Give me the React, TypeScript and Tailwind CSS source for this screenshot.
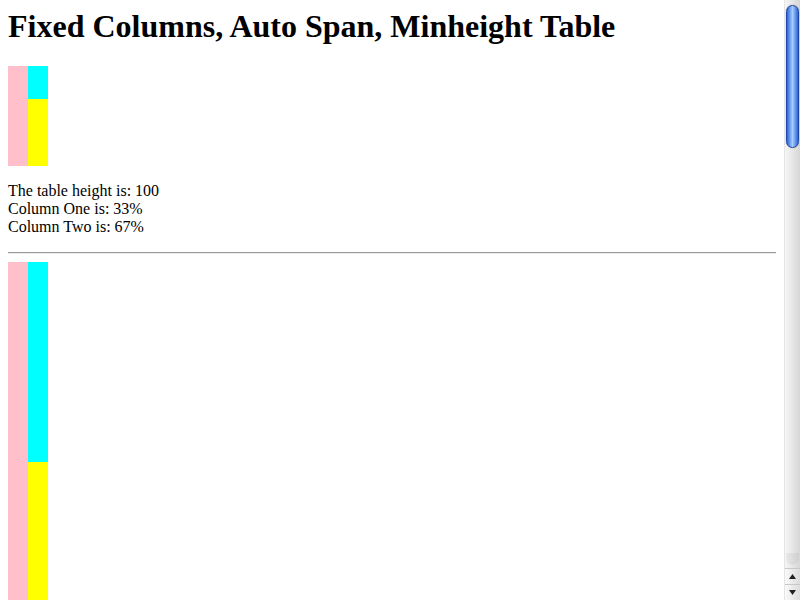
import React from "react";

function Bars({ h }: { h: number }) {
  const top = Math.round(h * 0.33);
  return (
    <div className="flex w-[40px] shrink-0" style={{ height: h }}>
      <div className="w-[20px] bg-[#ffc0cb]" />
      <div className="flex w-[20px] flex-col">
        <div className="bg-[#00ffff]" style={{ height: top }} />
        <div className="flex-1 bg-[#ffff00]" />
      </div>
    </div>
  );
}

function Scrollbar() {
  return (
    <div className="flex w-[16px] shrink-0 flex-col bg-linear-to-r from-[#f6f6f6] to-[#d6d6d6] border-l border-[#e4e4e4]">
      <div className="flex flex-1 flex-col">
        <div className="mx-[1px] mt-[5px] h-[143px] rounded-full border border-[#1c47a8] bg-linear-to-r from-[#2a63d8] via-[#a9ccff] to-[#2a63d8] shadow-[0_0_1px_#777]" />
        <div className="mx-[1px] mt-auto mb-[3px] h-[12px] rounded-b-full bg-linear-to-r from-[#e8e8e8] to-[#cfcfcf]" />
      </div>
      <div className="flex h-[16px] items-center justify-center border-t border-[#c8c8c8] bg-linear-to-r from-[#fafafa] to-[#dcdcdc]">
        <svg width="7" height="5" viewBox="0 0 7 5"><path d="M3.5 0L7 5H0z" fill="#222" /></svg>
      </div>
      <div className="flex h-[16px] items-center justify-center border-t border-[#c8c8c8] bg-linear-to-r from-[#fafafa] to-[#dcdcdc]">
        <svg width="7" height="5" viewBox="0 0 7 5"><path d="M0 0H7L3.5 5z" fill="#222" /></svg>
      </div>
    </div>
  );
}

export default function App() {
  return (
    <div className="flex h-[600px] w-[800px] overflow-hidden bg-white text-black font-['Liberation_Serif',serif]">
      <div className="flex min-w-0 flex-1 flex-col overflow-hidden px-[8px] pt-[8px]">
        <h1 className="mb-[21px] text-[32px] font-bold leading-[37px]">
          Fixed Columns, Auto Span, Minheight Table
        </h1>
        <Bars h={100} />
        <div className="mt-[16px] text-[16px] leading-[18px]">
          <div>The table height is: 100</div>
          <div>Column One is: 33%</div>
          <div>Column Two is: 67%</div>
        </div>
        <div className="mt-[16px] h-[2px] shrink-0 border-t border-b border-t-[#9a9a9a] border-b-[#ececec]" />
        <div className="mt-[8px]">
          <Bars h={606} />
        </div>
      </div>
      <Scrollbar />
    </div>
  );
}
